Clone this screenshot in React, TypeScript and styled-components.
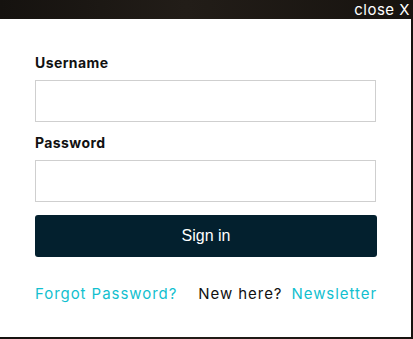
import React from 'react';
import styled, {createGlobalStyle} from 'styled-components';

const GlobalStyle = createGlobalStyle`
  html, body {
    margin: 0;
    padding: 0;
    background: #1b1713;
  }
  * {
    box-sizing: border-box;
  }
`;

const Overlay = styled.div`
  width: 413px;
  height: 339px;
  display: flex;
  flex-direction: column;
  background: linear-gradient(90deg, #15120f 0%, #221d18 45%, #17130f 100%);
  font-family: Inter, "Noto Sans", sans-serif;
`;

const TopBar = styled.div`
  height: 19px;
  display: flex;
  justify-content: flex-end;
  align-items: center;
  padding-right: 3px;
`;

const CloseButton = styled.button`
  background: none;
  border: none;
  padding: 0;
  color: #ffffff;
  font-family: inherit;
  font-size: 15px;
  letter-spacing: 0.5px;
  line-height: 19px;
  cursor: pointer;
`;

const Panel = styled.div`
  width: 411px;
  height: 318px;
  background: #ffffff;
  padding: 34px 35px 0 35px;
  display: flex;
  flex-direction: column;
`;

const Label = styled.label<{spaced?: boolean}>`
  display: block;
  font-size: 14px;
  font-weight: 700;
  letter-spacing: 0.4px;
  line-height: 20px;
  color: #111111;
  margin-top: ${p => p.spaced ? '11px' : '0'};
`;

const Input = styled.input`
  display: block;
  width: 341px;
  height: 42px;
  margin-top: 7px;
  border: 1px solid #cfcfcf;
  border-radius: 0;
  padding: 0 10px;
  font-size: 15px;
  outline: none;
`;

const SubmitButton = styled.button`
  width: 342px;
  height: 42px;
  margin-top: 13px;
  background: #03202e;
  color: #ffffff;
  border: none;
  border-radius: 3px;
  font-family: "Liberation Sans", Arial, sans-serif;
  font-size: 16px;
  cursor: pointer;
`;

const LinkRow = styled.div`
  margin-top: 27px;
  width: 342px;
  display: flex;
  justify-content: space-between;
  align-items: center;
  font-size: 15px;
  letter-spacing: 0.95px;
  line-height: 20px;
`;

const Link = styled.a`
  color: #12bfcf;
  text-decoration: none;
`;

const Signup = styled.span`
  color: #111111;
  display: flex;
  gap: 9px;
`;

const App = () => {
    return (
        <>
            <GlobalStyle/>
            <Overlay>
                <TopBar>
                    <CloseButton>close X</CloseButton>
                </TopBar>
                <Panel>
                    <Label htmlFor="username">Username</Label>
                    <Input id="username" type="text"/>
                    <Label htmlFor="password" spaced>Password</Label>
                    <Input id="password" type="password"/>
                    <SubmitButton>Sign in</SubmitButton>
                    <LinkRow>
                        <Link href="#">Forgot Password?</Link>
                        <Signup>
                            New here?
                            <Link href="#">Newsletter</Link>
                        </Signup>
                    </LinkRow>
                </Panel>
            </Overlay>
        </>
    );
};

export default App;
